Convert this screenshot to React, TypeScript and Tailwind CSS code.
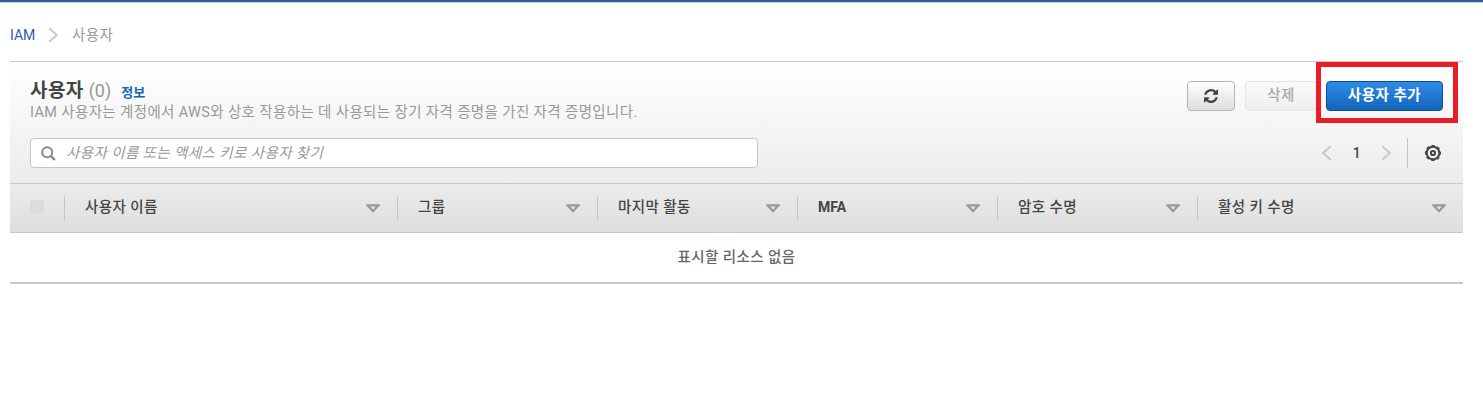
const SearchIcon = () => (
  <svg width="15" height="15" viewBox="0 0 15 15" fill="none" stroke="#888" strokeWidth="2">
    <circle cx="6.2" cy="6.2" r="5" />
    <path d="M9.8 9.8l4 4" strokeWidth="2.4" />
  </svg>
);

const SortIcon = () => (
  <svg width="14" height="9" viewBox="0 0 14 9" className="shrink-0">
    <path d="M1.6 1.3h10.8L7 7.2z" fill="none" stroke="#999" strokeWidth="2.2" />
  </svg>
);

const Chevron = ({ left = false }: { left?: boolean }) => (
  <svg width="10" height="16" viewBox="0 0 10 16">
    <path d={left ? "M8.7 1.2L1.2 8l7.500 6.8" : "M1.3 1.2L8.800 8l-7.500 6.8"} fill="none" stroke="#c8c8c8" strokeWidth="2" />
  </svg>
);

const RefreshIcon = () => (
  <svg width="14" height="14" viewBox="0 0 1536 1536" fill="#444">
    <path d="M1511 928q0 5-1 7-64 268-268 434.500T764 1536q-146 0-282.500-55T238 1324l-129 129q-19 19-45 19t-45-19-19-45V960q0-26 19-45t45-19h448q26 0 45 19t19 45-19 45l-137 137q71 66 161 102t187 36q134 0 250-65t186-179q11-17 53-117 8-23 30-23h192q13 0 22.500 9.500t9.500 22.500zM1536 128v448q0 26-19 45t-45 19h-448q-26 0-45-19t-19-45 19-45l138-138Q969 256 768 256q-134 0-250 65T332 500q-11 17-53 117-8 23-30 23H50q-13 0-22.500-9.500T18 608v-7q65-268 270-434.500T768 0q146 0 284 55.500T1297 212l130-129q19-19 45-19t45 19 19 45z" />
  </svg>
);

const GearIcon = () => (
  <svg width="18" height="18" viewBox="0 0 18 18" fill="none" stroke="#444">
    <circle cx="9" cy="9" r="6.3" strokeWidth="2" />
    <circle cx="9" cy="9" r="7.500" strokeWidth="1.2" strokeDasharray="3.4 2.49" strokeDashoffset="1.7" />
    <circle cx="9" cy="9" r="2.100" strokeWidth="2" />
  </svg>
);

const columns = [
  { label: "사용자 이름", width: "w-[333px]", text: "" },
  { label: "그룹", width: "w-[200px]", text: "" },
  { label: "마지막 활동", width: "w-[200px]", text: "" },
  { label: "MFA", width: "w-[200px]", text: "-mt-0.5 text-[14px] font-bold tracking-normal" },
  { label: "암호 수명", width: "w-[200px]", text: "" },
  { label: "활성 키 수명", width: "w-[266px]", text: "" },
];

export default function App() {
  return (
    <div className="h-[416px] w-full overflow-hidden bg-white font-['Roboto','Noto_Sans_CJK_KR',sans-serif] text-[14.5px] leading-5 tracking-[0.4px] text-[#444]">
      <div className="h-[3px] border-b border-[#c3d2e3] bg-[#2e5f97]" />
      <nav className="flex h-[58px] items-center pl-[10px] pt-[6px]">
        <a className="w-[38px] text-[14px] tracking-normal text-[#2a5db0]">IAM</a>
        <Chevron />
        <span className="ml-[14px] pt-[2px] text-[#999]">사용자</span>
      </nav>

      <main className="ml-[10px] w-[1453px]">
        <header className="h-[122px] border-t border-[#c8c8c8] bg-linear-to-b from-white to-[#ececec] pl-5 pr-5 pt-[17px]">
          <div className="flex h-[59px] justify-between">
            <div>
              <div className="flex h-6 items-baseline">
                <h1 className="text-[19px] font-bold leading-6">사용자</h1>
                <span className="ml-[5px] text-[18px] tracking-normal text-[#999]">(0)</span>
                <a className="ml-[10px] text-[13px] font-bold leading-5 tracking-normal text-[#1166bb]">정보</a>
              </div>
              <p className="leading-[19px] tracking-[0.36px] text-[#999]">
                IAM 사용자는 계정에서 AWS와 상호 작용하는 데 사용되는 장기 자격 증명을 가진 자격 증명입니다.
              </p>
            </div>
            <div className="flex pt-[2px]">
              <button className="flex h-[30px] w-[48px] items-center justify-center rounded-[4px] border border-[#b5b5b5] bg-linear-to-b from-white to-[#dddddd]">
                <RefreshIcon />
              </button>
              <button className="ml-[10px] h-[30px] w-[72px] rounded-[4px] border border-[#e5e5e5] bg-linear-to-b from-[#fafafa] to-[#eeeeee] pb-px font-medium text-[#aaa]">
                삭제
              </button>
              <div className="relative ml-[9px]">
                <button className="h-[30px] w-[117px] rounded-[4px] border border-[#0f4a8a] bg-linear-to-b from-[#2e8bea] to-[#1166bb] pb-px font-bold tracking-[0.5px] text-white">
                  사용자 추가
                </button>
                <div className="absolute -left-[10px] -top-[19px] h-[61px] w-[142px] border-5 border-[#ea1c24]" />
              </div>
            </div>
          </div>
          <div className="flex h-[30px] justify-between">
            <label className="flex w-[728px] items-center rounded-[4px] border border-[#c5c5c5] bg-white pl-[10px]">
              <SearchIcon />
              <span className="ml-[10px] pt-px italic text-[#999]">사용자 이름 또는 액세스 키로 사용자 찾기</span>
            </label>
            <div className="flex items-center">
              <Chevron left />
              <span className="w-[49px] pl-px text-center text-[14px] font-medium leading-5">1</span>
              <Chevron />
              <div className="ml-[16px] h-[30px] w-px bg-[#c5c5c5]" />
              <div className="ml-[16px] mr-px">
                <GearIcon />
              </div>
            </div>
          </div>
        </header>

        <section>
          <div className="flex h-[50px] items-center border-y border-[#c8c8c8] bg-linear-to-b from-[#ececec] to-[#dedede]">
            <div className="w-[54px] pl-5">
              <div className="mb-[2px] size-[14px] rounded-[2px] bg-[#dcdcdc]" />
            </div>
            {columns.map((c) => (
              <div key={c.label} className={`${c.width} flex h-6 items-center justify-between border-l border-[#c5c5c5] pl-5 pr-[17px] font-medium`}>
                <span className={c.text}>{c.label}</span>
                <SortIcon />
              </div>
            ))}
          </div>
          <div className="flex h-[51px] items-center justify-center border-b-2 border-[#c8c8c8] font-medium text-[#666]">
            표시할 리소스 없음
          </div>
        </section>
      </main>
    </div>
  );
}
